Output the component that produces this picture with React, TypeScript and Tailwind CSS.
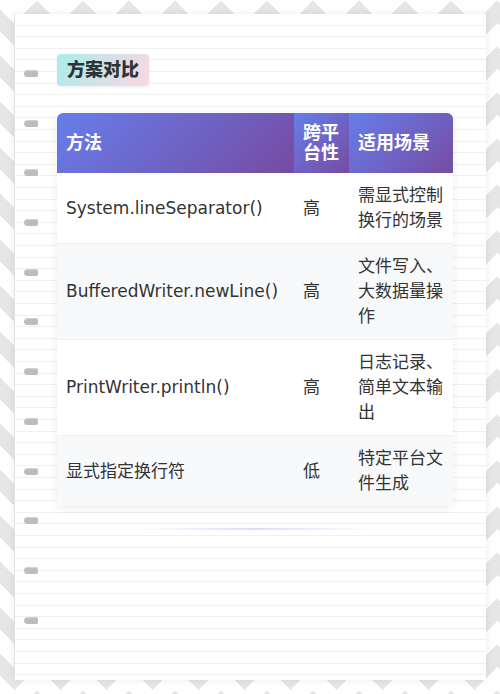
const rows = [
  { method: 'System.lineSeparator()', cross: '高', usage: '需显式控制换行的场景' },
  { method: 'BufferedWriter.newLine()', cross: '高', usage: '文件写入、大数据量操作' },
  { method: 'PrintWriter.println()', cross: '高', usage: '日志记录、简单文本输出' },
  { method: '显式指定换行符', cross: '低', usage: '特定平台文件生成' },
];

const holes = Array.from({ length: 12 }, (_, i) => i);

export default function App() {
  return (
    <div
      className="min-h-[694px] w-full p-[14px] bg-white [background-image:linear-gradient(135deg,#e6e6e6_25%,transparent_25%),linear-gradient(225deg,#e6e6e6_25%,transparent_25%),linear-gradient(315deg,#e6e6e6_25%,transparent_25%),linear-gradient(45deg,#e6e6e6_25%,transparent_25%)] [background-position:-32px_-23px,-32px_-23px,-9px_-23px,-9px_-23px] [background-size:46px_46px]"
      style={{ fontFamily: '"DejaVu Sans", "Noto Sans CJK SC", sans-serif' }}
    >
      <div className="relative min-h-[666px] bg-white border-l border-[#e2e2e2] shadow-[0_0_8px_rgba(0,0,0,0.08)] bg-[repeating-linear-gradient(to_bottom,transparent_0,transparent_10.6px,#f0f0f0_10.6px,#f0f0f0_11.6px)] pl-[42px] pr-[33px] pt-[40px] pb-[40px]">
        {/* binder holes */}
        <div className="absolute left-[9px] top-[56px] flex flex-col gap-[42.7px]">
          {holes.map((i) => (
            <div key={i} className="w-[14px] h-[7px] rounded-l-[4px] rounded-r-[2px] bg-[#bcbcbc] shadow-[inset_0_1px_1px_rgba(255,255,255,0.35)]" />
          ))}
        </div>

        <div className="inline-block px-[10px] py-[3px] rounded-[4px] bg-[linear-gradient(120deg,#a8edea,#fed6e3)] shadow-[0_1px_3px_rgba(0,0,0,0.08)]">
          <span className="text-[18px] leading-[25px] font-black text-[#2d3436]">方案对比</span>
        </div>

        <div className="mt-[27px] rounded-[6px] overflow-hidden shadow-[0_2px_10px_rgba(0,0,0,0.07)] bg-white">
          <table className="w-full table-fixed border-collapse">
            <colgroup>
              <col className="w-[237px]" />
              <col className="w-[55px]" />
              <col />
            </colgroup>
            <thead>
              <tr>
                {['方法', '跨平台性', '适用场景'].map((h) => (
                  <th
                    key={h}
                    className="px-[9px] py-[10px] text-left align-middle text-[18px] leading-[20px] font-bold text-white bg-[linear-gradient(135deg,#667eea,#764ba2)]"
                  >
                    {h}
                  </th>
                ))}
              </tr>
            </thead>
            <tbody>
              {rows.map((r, i) => (
                <tr key={r.method} className={`border-b border-[#f0f0f0] ${i % 2 === 1 ? 'bg-[#f8f9fa]' : 'bg-white'}`}>
                  <td className="px-[9px] py-[10px] align-middle text-[17px] leading-[25px] text-[#333]">{r.method}</td>
                  <td className="px-[9px] py-[10px] align-middle text-[17px] leading-[25px] text-[#333]">{r.cross}</td>
                  <td className="px-[9px] py-[10px] align-middle text-[17px] leading-[25px] text-[#333]">{r.usage}</td>
                </tr>
              ))}
            </tbody>
          </table>
        </div>

        <div className="mt-[21px] mx-auto w-[60%] h-[2px] bg-[linear-gradient(to_right,transparent,rgba(102,126,234,0.25),transparent)]" />
      </div>
    </div>
  );
}
